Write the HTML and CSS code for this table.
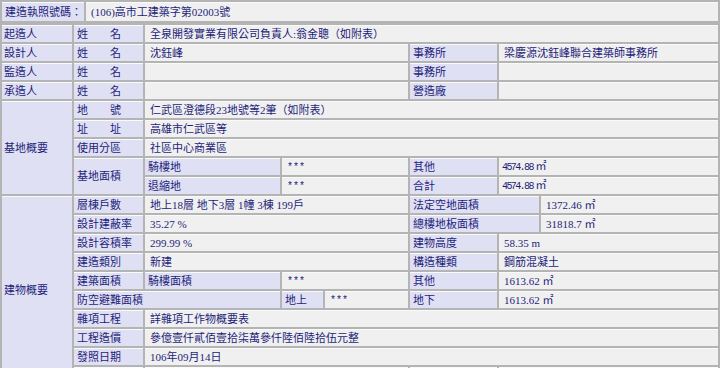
FILE: index.html
```html
<!DOCTYPE html>
<html lang="zh-Hant">
<head>
<meta charset="utf-8">
<title>建造執照</title>
<link rel="stylesheet" href="styles.css">
</head>
<body>
<table class="head">
  <colgroup><col class="h1"><col class="h2"></colgroup>
  <tr><td class="lb">建造執照號碼：</td><td class="vl">(106)高市工建築字第02003號</td></tr>
</table>
<table class="main">
  <colgroup>
    <col class="ca"><col class="cb"><col class="cc"><col class="cd">
    <col class="ce"><col class="cf"><col class="cg"><col class="ch">
  </colgroup>
  <tr><td class="lb first">起造人</td><td class="lb">姓　　名</td><td class="vl" colspan="6">全泉開發實業有限公司負責人:翁金聰（如附表）</td></tr>
  <tr><td class="lb first">設計人</td><td class="lb">姓　　名</td><td class="vl" colspan="3">沈鈺峰</td><td class="lb">事務所</td><td class="vl" colspan="2">梁慶源沈鈺峰聯合建築師事務所</td></tr>
  <tr><td class="lb first">監造人</td><td class="lb">姓　　名</td><td class="vl" colspan="3"></td><td class="lb">事務所</td><td class="vl" colspan="2"></td></tr>
  <tr><td class="lb first">承造人</td><td class="lb">姓　　名</td><td class="vl" colspan="3"></td><td class="lb">營造廠</td><td class="vl" colspan="2"></td></tr>
  <tr><td class="lb first" rowspan="5">基地概要</td><td class="lb">地　　號</td><td class="vl" colspan="6">仁武區澄德段23地號等2筆（如附表）</td></tr>
  <tr><td class="lb">址　　址</td><td class="vl" colspan="6">高雄市仁武區等</td></tr>
  <tr><td class="lb">使用分區</td><td class="vl" colspan="6">社區中心商業區</td></tr>
  <tr><td class="lb" rowspan="2">基地面積</td><td class="lb">騎樓地</td><td class="vl star" colspan="2">***</td><td class="lb">其他</td><td class="vl mono" colspan="2"><span class="num">4574.88</span> ㎡</td></tr>
  <tr><td class="lb">退縮地</td><td class="vl star" colspan="2">***</td><td class="lb">合計</td><td class="vl mono" colspan="2"><span class="num">4574.88</span> ㎡</td></tr>
  <tr><td class="lb first" rowspan="10">建物概要</td><td class="lb">層棟戶數</td><td class="vl" colspan="3">地上18層 地下3層 1幢 3棟 199戶</td><td class="lb" colspan="2">法定空地面積</td><td class="vl">1372.46 ㎡</td></tr>
  <tr><td class="lb">設計建蔽率</td><td class="vl" colspan="3">35.27 %</td><td class="lb" colspan="2">總樓地板面積</td><td class="vl">31818.7 ㎡</td></tr>
  <tr><td class="lb">設計容積率</td><td class="vl" colspan="3">299.99 %</td><td class="lb">建物高度</td><td class="vl" colspan="2">58.35 m</td></tr>
  <tr><td class="lb">建造類別</td><td class="vl" colspan="3">新建</td><td class="lb">構造種類</td><td class="vl" colspan="2">鋼筋混凝土</td></tr>
  <tr><td class="lb">建築面積</td><td class="lb">騎樓面積</td><td class="vl star" colspan="2">***</td><td class="lb">其他</td><td class="vl" colspan="2">1613.62 ㎡</td></tr>
  <tr><td class="lb" colspan="2">防空避難面積</td><td class="lb">地上</td><td class="vl star">***</td><td class="lb">地下</td><td class="vl" colspan="2">1613.62 ㎡</td></tr>
  <tr><td class="lb">雜項工程</td><td class="vl" colspan="6">詳雜項工作物概要表</td></tr>
  <tr><td class="lb">工程造價</td><td class="vl" colspan="6">參億壹仟貳佰壹拾柒萬參仟陸佰陸拾伍元整</td></tr>
  <tr><td class="lb">發照日期</td><td class="vl" colspan="6">106年09月14日</td></tr>
  <tr><td class="lb"></td><td class="vl" colspan="3"></td><td class="lb"></td><td class="vl" colspan="2"></td></tr>
</table>
</body>
</html>
```
FILE: styles.css
```css
html, body {
  margin: 0;
  padding: 0;
  background: #ffffff;
}
body {
  font-family: "Liberation Serif", "Noto Sans CJK TC", serif;
  font-size: 11px;
  color: #1e1e7a;
}
table {
  width: 720px;
  table-layout: fixed;
  border-collapse: separate;
  border-spacing: 2px;
  background: #b4b4b4;
}
td {
  box-sizing: border-box;
  height: 17px;
  padding: 0 0 0 5px;
  white-space: nowrap;
  overflow: hidden;
  line-height: 15px;
  vertical-align: middle;
  border-top: 1px solid #fafafa;
}
.head td {
  height: 19px;
}
.h1 { width: 82px; }
.h2 { width: 632px; }
.ca { width: 70px; }
.cb { width: 69px; }
.cc { width: 135px; }
.cd { width: 41px; }
.ce { width: 83px; }
.cf { width: 87px; }
.cg { width: 40px; }
.ch { width: 177px; }
.lb {
  background: #e0e0f4;
  padding-left: 3px;
}
.lb.first {
  padding-left: 2px;
}
.vl {
  background: #f0f0f0;
}
.mono {
  padding-left: 3px;
}
.num {
  font-family: "Liberation Mono", monospace;
  font-size: 10px;
  letter-spacing: -1.6px;
}
.star {
  font-family: "Liberation Mono", monospace;
  font-size: 10px;
}
```
